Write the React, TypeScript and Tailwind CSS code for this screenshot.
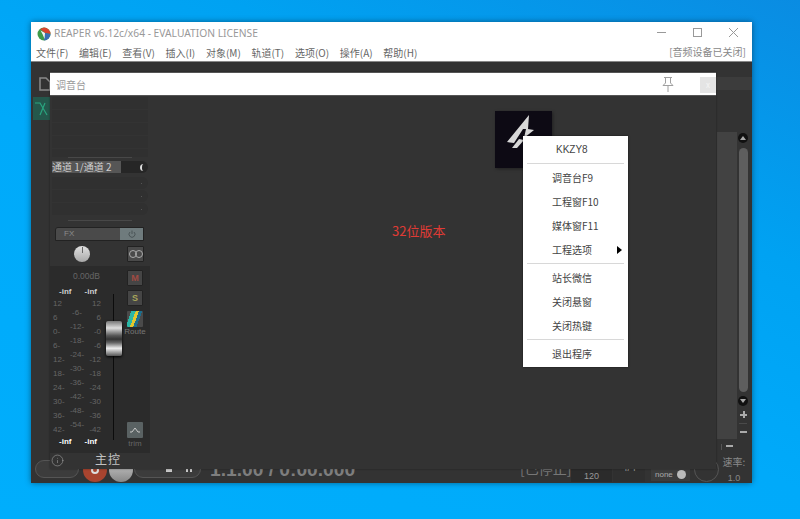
import React from 'react';
import { Info } from 'lucide-react';

const MENUS = ['文件(F)', '编辑(E)', '查看(V)', '插入(I)', '对象(M)', '轨道(T)', '选项(O)', '操作(A)', '帮助(H)'];

const LEFT_SCALE = ['12', '6', '0-', '6-', '12-', '18-', '24-', '30-', '36-', '42-'];
const MID_SCALE = ['-6-', '-12-', '-18-', '-24-', '-30-', '-36-', '-42-', '-48-', '-54-'];
const RIGHT_SCALE = ['12', '6', '-0', '-6', '-12', '-18', '-24', '-30', '-36', '-42'];

const ReaperLogo = () => (
  <svg width="14" height="14" viewBox="0 0 14 14">
    <circle cx="7" cy="7" r="6.5" fill="#3f9b4a" />
    <path d="M7 .5a6.5 6.5 0 0 1 6.5 6.5L8 6 3 2z" fill="#d9442f" />
    <path d="M13.5 7A6.5 6.5 0 0 1 7 13.5L8 6z" fill="#3b6fb5" />
    <path d="M3.5 3.5 8 6 7.5 12 5.5 7z" fill="#f4f4f4" />
  </svg>
);

const WindowControls = () => (
  <div className="absolute top-[6px] right-[14px] flex items-center gap-[27px]">
    <svg width="9" height="9" viewBox="0 0 9 9"><path d="M0 4.5h9" stroke="#999" /></svg>
    <svg width="9" height="9" viewBox="0 0 9 9"><rect x=".5" y=".5" width="8" height="8" fill="none" stroke="#999" /></svg>
    <svg width="9" height="9" viewBox="0 0 9 9"><path d="M0 0l9 9M9 0l-9 9" stroke="#999" /></svg>
  </div>
);

const PinIcon = () => (
  <svg width="12" height="15" viewBox="0 0 12 15" className="absolute left-[612px] top-[4px]">
    <path d="M2 .5h8M3.5 1v5M8.5 1v5M3.5 6 1 8.5h10L8.5 6M6 9v6" fill="none" stroke="#a0a0a0" />
  </svg>
);

const Menu = ({ items }: { items: string[] }) => (
  <>
    {items.map((t) => (
      <div key={t} className="h-[24px] flex items-center justify-between pl-[29px] pr-[6px] text-[#444] text-[10px] leading-none">
        <span>{t}</span>
        {t === '工程选项' && <span className="w-0 h-0 border-y-[4px] border-y-transparent border-l-[5px] border-l-black" />}
      </div>
    ))}
  </>
);

const Divider = () => <div className="h-px bg-[#d8d8d8] mx-[4px] mt-px mb-[2px]" />;

const SmallButton = ({ className, children }: { className?: string; children?: React.ReactNode }) => (
  <div className={`w-4 h-4 rounded-[1px] border border-[#222] bg-[#454545] flex items-center justify-center text-[9px] font-bold leading-none font-['Liberation_Sans',sans-serif] ${className ?? ''}`}>
    {children}
  </div>
);

const Bands = ({ count, dots }: { count: number; dots?: boolean }) => (
  <div className="flex flex-col gap-px mx-[2px]">
    {Array.from({ length: count }).map((_, i) => (
      <div key={i} className={`h-3 bg-[#303030] flex items-center justify-end pr-[6px] ${dots ? 'rounded-r-full' : ''}`}>
        {dots && <span className="w-px h-px bg-[#555]" />}
      </div>
    ))}
  </div>
);

const InfRow = ({ color }: { color: string }) => (
  <div className={`h-[9px] pl-[9px] w-[47px] flex justify-between text-[8px] leading-[9px] font-bold font-['Liberation_Sans',sans-serif] ${color}`}>
    <span>-inf</span>
    <span>-inf</span>
  </div>
);

const Meter = () => (
  <div className="mt-px h-[140px] pl-[3px] flex text-[8px] leading-[14px] text-[#666] font-['Liberation_Sans',sans-serif]">
    <div className="w-[13px] flex flex-col">
      {LEFT_SCALE.map((s, i) => <span key={i} className="h-[14px]">{s}</span>)}
    </div>
    <div className="w-[22px] mt-[9px] flex flex-col items-center">
      {MID_SCALE.map((s, i) => <span key={i} className="h-[14px]">{s}</span>)}
    </div>
    <div className="w-[13px] flex flex-col items-end">
      {RIGHT_SCALE.map((s, i) => <span key={i} className="h-[14px]">{s}</span>)}
    </div>
  </div>
);

const MasterStrip = () => (
  <div className="w-[100px] h-full flex flex-col items-stretch">
    <div className="h-[61px] pt-[1px] overflow-hidden"><Bands count={5} /></div>
    <div className="h-px bg-[#484848] mx-[18px]" />
    <div className="mt-[3px] ml-[2px] w-[96px] h-3 flex items-center">
      <div className="w-[69px] h-3 bg-[#565656] text-[#cfcfcf] text-[10px] leading-3 whitespace-nowrap">通道 1/通道 2</div>
      <div className="flex-1 h-3 bg-[#262626] rounded-r-full flex justify-end pr-[3px] items-center">
        <span className="w-[5px] h-[7px] border-l-2 border-[#ddd] rounded-l-full" />
      </div>
    </div>
    <div className="mt-[4px]"><Bands count={3} dots /></div>
    <div className="h-px bg-[#484848] mx-[18px] mt-[5px]" />
    <div className="mt-[6px] ml-[5px] w-[89px] h-[14px] flex border border-[#222] rounded-tl-[3px] overflow-hidden shrink-0">
      <div className="flex-1 bg-[#4a4a4a] text-[#8a8a8a] text-[8px] leading-3 pl-2 font-['Liberation_Sans',sans-serif]">FX</div>
      <div className="w-[23px] bg-[#6f7b7d] flex items-center justify-center">
        <svg width="8" height="8" viewBox="0 0 8 8"><path d="M2 2a3 3 0 1 0 4 0M4 .5v3.5" fill="none" stroke="#4b5557" /></svg>
      </div>
    </div>
    <div className="mt-[5px] flex items-center pl-[24px] pr-[6px] justify-between shrink-0">
      <div className="w-4 h-4 rounded-full bg-[linear-gradient(#e0e0e0,#a8a8a8)] flex justify-center"><span className="w-px h-[6px] bg-[#666] mt-[1px]" /></div>
      <div className="w-[17px] h-4 rounded-[1px] border border-[#222] bg-[#4a4a4a] flex items-center justify-center">
        <span className="w-[8px] h-[8px] rounded-full border border-[#aaa]" />
        <span className="w-[8px] h-[8px] rounded-full border border-[#aaa] -ml-[2px]" />
      </div>
    </div>
    <div className="mt-[4px] flex-1 min-h-0 bg-[#2b2b2b] flex">
      <div className="w-[51px] shrink-0 flex flex-col">
        <div className="mt-[6px] h-[9px] pl-[23px] text-[8.5px] leading-[9px] text-[#666] whitespace-nowrap font-['Liberation_Sans',sans-serif]">0.00dB</div>
        <div className="mt-[6px]"><InfRow color="text-[#cfcfcf]" /></div>
        <Meter />
        <InfRow color="text-white" />
      </div>
      <div className="w-[26px] shrink-0 relative">
        <div className="ml-[12px] mt-[28px] w-px h-[146px] bg-[#0c0c0c]" />
        <div className="absolute left-[5px] top-[55px] w-[16px] h-[35px] rounded-[2px] shadow-[0_1px_3px_#000] bg-[linear-gradient(#777,#ddd_20%,#555_42%,#333_52%,#666_62%,#eee_78%,#555)]" />
      </div>
      <div className="w-4 shrink-0 flex flex-col items-center">
        <SmallButton className="mt-[4px] text-[#a04a42]">M</SmallButton>
        <SmallButton className="mt-[4px] text-[#a8a65a]">S</SmallButton>
        <div className="mt-[5px] w-[16px] h-[16px] shrink-0 rounded-[1px] bg-[linear-gradient(110deg,#4a4a4a_20%,#2ab7a6_20%,#2ab7a6_40%,#e2c72d_40%,#e2c72d_55%,#1d6f8f_55%,#1d6f8f_70%,#4a4a4a_70%)]" />
        <span className="mt-px h-2 text-[8px] leading-2 text-[#777] font-['Liberation_Sans',sans-serif]">Route</span>
        <div className="mt-[86px] w-4 h-4 shrink-0 bg-[#5a6263] rounded-[1px] flex items-center justify-center">
          <svg width="10" height="6" viewBox="0 0 10 6"><path d="M0 5h2l3-4 3 4h2" fill="none" stroke="#c8c8c8" /></svg>
        </div>
        <span className="mt-[2px] h-2 text-[8px] leading-2 text-[#666] font-['Liberation_Sans',sans-serif]">trim</span>
      </div>
    </div>
    <div className="h-[16px] shrink-0 relative flex items-center justify-center text-[#c2c2c2] text-[12px] leading-none tracking-[1px]">
      <Info size={13} strokeWidth={1} className="absolute left-[1px] top-[1px] text-[#aaa]" />
      <span className="pl-[16px] -mt-[4px]">主控</span>
    </div>
  </div>
);

const AppLogo = () => (
  <div className="absolute left-[445px] top-[39px] w-[57px] h-[57px] bg-[#0d0a14] shadow-[1px_1px_3px_#00000060]">
    <svg width="57" height="57" viewBox="0 0 57 57">
      <path d="M34 4 L33 18 L39 19 L29 27 L31 18 L28 18 L19 32 L12 31 Z" fill="#d8d8d8" />
      <path d="M24 28 L29 29 L22 37 L17 37 Z" fill="#d8d8d8" />
    </svg>
  </div>
);

const ContextMenu = () => (
  <div className="absolute left-[473px] top-[64px] w-[105px] h-[231px] bg-white shadow-[0_0_2px_#00000090] flex flex-col pt-px">
    <div className="h-[25px] flex items-center pl-[33px] pt-px text-[#444] text-[10px] leading-none font-['Liberation_Sans',sans-serif]">KKZY8</div>
    <Divider />
    <Menu items={['调音台F9', '工程窗F10', '媒体窗F11', '工程选项']} />
    <Divider />
    <Menu items={['站长微信', '关闭悬窗', '关闭热键']} />
    <Divider />
    <Menu items={['退出程序']} />
  </div>
);

const Mixer = () => (
  <div className="absolute left-[19px] top-[50px] w-[666px] h-[397px] bg-[#333] flex flex-col shadow-[0_0_2px_#00000060]">
    <div className="h-[24px] shrink-0 bg-white border-y border-[#555] flex items-center text-[#999] text-[10px] pl-[6px] relative">
      <span>调音台</span>
      <PinIcon />
      <div className="absolute right-0 top-[4px] w-4 h-4 bg-[#e4e4e4] text-[#f4f4f4] text-[8px] leading-4 text-center">x</div>
    </div>
    <div className="flex-1 relative min-h-0">
      <MasterStrip />
      <div className="absolute left-[342px] top-[127px] text-[#e03b35] text-[13px] leading-4 whitespace-nowrap">32位版本</div>
    </div>
    <AppLogo />
    <ContextMenu />
  </div>
);

const Transport = () => (
  <div className="absolute left-0 bottom-0 w-full h-[30px] flex items-start text-[#8a8a8a]">
    <div className="ml-[4px] mt-[7px] w-[44px] h-[18px] shrink-0 rounded-full border border-[#555] bg-[#3c3c3c]" />
    <div className="ml-[4px] mt-[5px] w-[24px] h-[24px] shrink-0 rounded-full bg-[#a8442f] flex items-center justify-center"><span className="w-2 h-2 rounded-full border-2 border-[#ddd]" /></div>
    <div className="ml-[2px] mt-[5px] w-[24px] h-[24px] shrink-0 rounded-full bg-[linear-gradient(#d0d0d0,#888)]" />
    <div className="ml-px mt-[7px] w-[67px] h-[18px] shrink-0 rounded-full border border-[#555] bg-[#3c3c3c] flex items-center pr-2 pl-[31px] gap-[14px]">
      <span className="w-[7px] h-[6px] bg-[#c8c8c8]" />
      <span className="w-[7px] h-[6px] border-x-2 border-[#c8c8c8]" />
    </div>
    <div className="ml-[9px] mt-[8px] w-[145px] shrink-0 text-[19.2px] leading-[18px] font-bold font-['Liberation_Sans',sans-serif] text-[#7e7e7e] whitespace-nowrap">1.1.00 / 0:00.000</div>
    <div className="ml-[165px] mt-[8px] w-[51px] shrink-0 text-[14px] leading-[14px] text-[#777] whitespace-nowrap">[已停止]</div>
    <div className="w-[41px] h-[29px] shrink-0 bg-[#2b2b2b] text-center text-[9px] leading-none pt-[19px] text-[#999] font-['Liberation_Sans',sans-serif]">120</div>
    <div className="ml-px w-[32px] h-[29px] shrink-0 bg-[#2f2f2f] text-center text-[10px] leading-[10px] pt-[10px] text-[#999] font-['Liberation_Sans',sans-serif]">4/4</div>
    <div className="ml-[6px] mt-[15px] w-[39px] h-[13px] shrink-0 bg-[#3c3c3c] flex items-center justify-between px-[4px] text-[8px] text-[#aaa] font-['Liberation_Sans',sans-serif]">
      none<span className="w-[9px] h-[9px] rounded-full bg-[#bbb]" />
    </div>
    <div className="ml-[4px] mt-[4px] w-[25px] h-[25px] shrink-0 rounded-full border border-[#555]" />
    <div className="ml-[4px] w-[22px] flex flex-col items-center text-[10px] leading-none text-[#888] shrink-0 whitespace-nowrap mt-[3px]">
      <span className="h-[12px] leading-3">速率:</span>
      <span className="text-[9px] mt-[6px] font-['Liberation_Sans',sans-serif]">1.0</span>
    </div>
  </div>
);

const ScrollDot = ({ up, className }: { up?: boolean; className: string }) => (
  <div className={`absolute w-[10px] h-[10px] rounded-full bg-[#111] flex items-center justify-center ${className}`}>
    <span className={`w-0 h-0 border-x-[3px] border-x-transparent ${up ? 'border-b-[4px] border-b-[#aaa]' : 'border-t-[4px] border-t-[#aaa]'}`} />
  </div>
);

const MainWindow = () => (
  <div className="absolute left-[31px] top-[22px] w-[721px] h-[461px] bg-[#333] shadow-[0_0_6px_#00000070] font-['Noto_Sans_CJK_SC','Noto_Sans',sans-serif]">
    <div className="h-[40px] bg-white border-b border-[#888] relative">
      <div className="h-[23px] flex items-center pl-[6px] gap-[3px] text-[10.25px] text-[#999] font-['Noto_Sans',sans-serif]">
        <ReaperLogo />
        <span>REAPER v6.12c/x64 - EVALUATION LICENSE</span>
      </div>
      <div className="h-[16px] -mt-px flex items-center pl-[5px] text-[10px] text-[#666] gap-[10.7px]">
        {MENUS.map((m) => <span key={m} className="whitespace-nowrap">{m}</span>)}
      </div>
      <div className="absolute right-[6px] top-[22px] h-4 leading-4 text-[10px] text-[#888] whitespace-nowrap">[音频设备已关闭]</div>
      <WindowControls />
    </div>

    <div className="absolute left-[8px] top-[55px]">
      <svg width="12" height="14" viewBox="0 0 12 14"><path d="M1 1h6l4 4v8H1z" fill="none" stroke="#8a8a8a" strokeWidth="1.5" /></svg>
    </div>
    <div className="absolute left-[2px] top-[75px] w-[17px] h-[23px] bg-[#24584c] flex items-center justify-center">
      <svg width="15" height="14" viewBox="0 0 15 14"><path d="M1 1h5l7 12M11 1 6 13" fill="none" stroke="#2aa57f" strokeWidth="1.2" /></svg>
    </div>

    <div className="absolute left-[685px] top-[55px] w-[36px] h-[13px] bg-[#3c3c3c]" />
    <div className="absolute left-[686px] top-[110px] w-[20px] h-[307px] bg-[#424242]" />
    <ScrollDot up className="left-[707px] top-[111px]" />
    <div className="absolute left-[708px] top-[126px] w-[9px] h-[244px] rounded-full bg-[#5e5e5e]" />
    <ScrollDot className="left-[707px] top-[374px]" />
    <div className="absolute left-[709px] top-[389px] w-[7px] h-[7px] bg-[linear-gradient(#aaa,#aaa),linear-gradient(#aaa,#aaa)] bg-[length:7px_2px,2px_7px] bg-center bg-no-repeat" />
    <div className="absolute left-[708px] top-[401px] w-[8px] h-px bg-[#4a4a4a]" />
    <div className="absolute left-[709px] top-[409px] w-[7px] h-[2px] bg-[#aaa]" />
    <div className="absolute left-[695px] top-[423px] w-[7px] h-[2px] bg-[#aaa]" />
    <div className="absolute left-[690px] top-[422px] w-px h-[6px] bg-[#555]" />

    <Transport />
    <Mixer />
  </div>
);

const App = () => {
  return (
    <div className="relative w-[800px] h-[519px] overflow-hidden bg-[linear-gradient(205deg,#0a8ce2_0%,#00a2f2_30%,#00aafa_55%,#00aefc_100%)]">
      <MainWindow />
    </div>
  );
};

export default App;
